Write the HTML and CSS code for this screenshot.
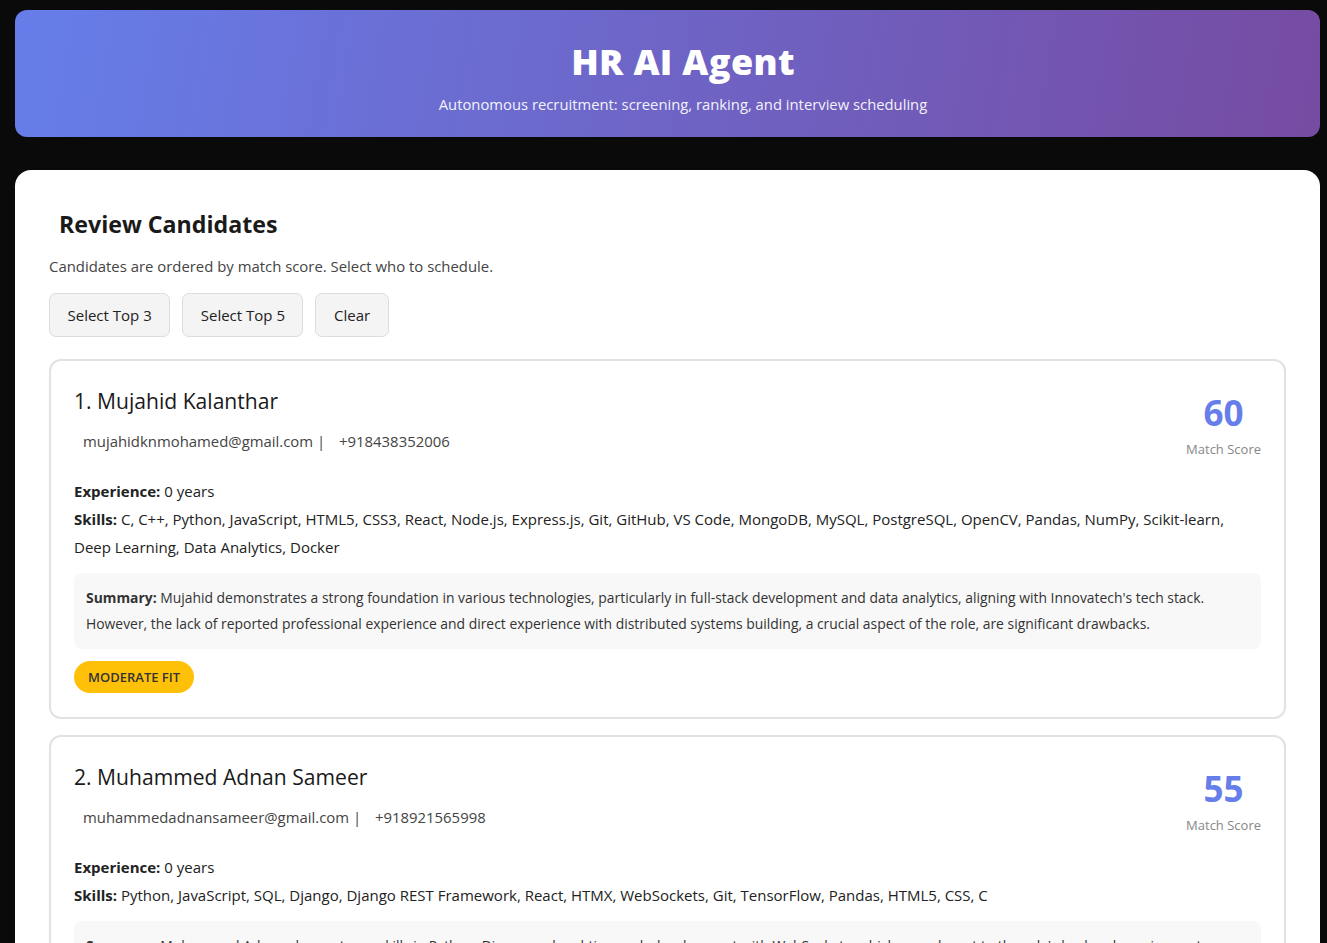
FILE: index.html
```html
<!DOCTYPE html>
<html lang="en">
<head>
<meta charset="utf-8">
<title>HR AI Agent</title>
<link rel="stylesheet" href="styles.css">
</head>
<body>
<div class="page">
  <header class="hero">
    <h1 class="hero-title">HR AI Agent</h1>
    <p class="hero-sub">Autonomous recruitment: screening, ranking, and interview scheduling</p>
  </header>

  <main class="panel">
    <h2 class="panel-title">Review Candidates</h2>
    <p class="panel-desc">Candidates are ordered by match score. Select who to schedule.</p>
    <div class="actions">
      <button class="btn">Select Top 3</button>
      <button class="btn">Select Top 5</button>
      <button class="btn">Clear</button>
    </div>

    <section class="cand">
      <div class="cand-head">
        <div class="cand-id">
          <h3 class="cand-name">1. Mujahid Kalanthar</h3>
          <div class="cand-contact"><span class="ico"></span>mujahidknmohamed@gmail.com | <span class="ico ico-wide"></span>+918438352006</div>
        </div>
        <div class="score">
          <div class="score-num">60</div>
          <div class="score-label">Match Score</div>
        </div>
      </div>
      <p class="line"><strong>Experience:</strong> 0 years</p>
      <p class="line"><strong>Skills:</strong> C, C++, Python, JavaScript, HTML5, CSS3, React, Node.js, Express.js, Git, GitHub, VS Code, MongoDB, MySQL, PostgreSQL, OpenCV, Pandas, NumPy, Scikit-learn, Deep Learning, Data Analytics, Docker</p>
      <div class="summary"><strong>Summary:</strong> Mujahid demonstrates a strong foundation in various technologies, particularly in full-stack development and data analytics, aligning with Innovatech's tech stack. However, the lack of reported professional experience and direct experience with distributed systems building, a crucial aspect of the role, are significant drawbacks.</div>
      <span class="badge">MODERATE FIT</span>
    </section>

    <section class="cand">
      <div class="cand-head">
        <div class="cand-id">
          <h3 class="cand-name">2. Muhammed Adnan Sameer</h3>
          <div class="cand-contact"><span class="ico"></span>muhammedadnansameer@gmail.com | <span class="ico ico-wide"></span>+918921565998</div>
        </div>
        <div class="score">
          <div class="score-num">55</div>
          <div class="score-label">Match Score</div>
        </div>
      </div>
      <p class="line"><strong>Experience:</strong> 0 years</p>
      <p class="line"><strong>Skills:</strong> Python, JavaScript, SQL, Django, Django REST Framework, React, HTMX, WebSockets, Git, TensorFlow, Pandas, HTML5, CSS, C</p>
      <div class="summary"><strong>Summary:</strong> Muhammed Adnan shows strong skills in Python, Django and real-time web development with WebSockets, which are relevant to the role's backend requirements. However, the absence of professional experience and limited exposure to distributed systems are notable gaps.</div>
      <span class="badge">MODERATE FIT</span>
    </section>
  </main>
</div>
</body>
</html>
```

FILE: styles.css
```css
* { box-sizing: border-box; }

html, body {
  margin: 0;
  padding: 0;
  background: #0a0a0a;
  font-family: "Open Sans", "Noto Sans", sans-serif;
  color: #222;
}

.page {
  padding: 10px 7px 0 15px;
  display: flex;
  flex-direction: column;
  gap: 33px;
}

.hero {
  height: 127px;
  border-radius: 12px;
  background: linear-gradient(100deg, #667eea 0%, #764ba2 100%);
  color: #fff;
  text-align: center;
  display: flex;
  flex-direction: column;
  align-items: center;
  padding: 26px 0 0 31px;
}

.hero-title {
  margin: 0;
  font-size: 36px;
  line-height: 52px;
  font-weight: 800;
  letter-spacing: 0.3px;
}

.hero-sub {
  margin: 6px 0 0;
  font-size: 14.8px;
  line-height: 20px;
  opacity: 0.92;
}

.panel {
  background: #fff;
  border-radius: 16px 16px 0 0;
  padding: 36px 34px 20px;
}

.panel-title {
  margin: 0 0 0 10px;
  font-size: 23.2px;
  line-height: 36px;
  font-weight: 700;
  color: #1a1a1a;
}

.panel-desc {
  margin: 14px 0 0;
  font-size: 14.9px;
  line-height: 20px;
  color: #444;
}

.actions {
  display: flex;
  gap: 12px;
  margin-top: 17px;
}

.btn {
  height: 44px;
  padding: 0 17.5px;
  font-family: inherit;
  font-size: 15px;
  color: #222;
  background: #f4f4f4;
  border: 1px solid #dcdcdc;
  border-radius: 7px;
}

.cand {
  margin-top: 22px;
  border: 2px solid #e2e2e2;
  border-radius: 12px;
  padding: 24px 23px 24px;
}

.cand + .cand { margin-top: 16px; }

.cand-head {
  display: flex;
  justify-content: space-between;
  align-items: flex-start;
}

.cand-name {
  margin: 0;
  font-size: 21.1px;
  line-height: 32px;
  font-weight: 400;
  color: #1a1a1a;
}

.cand-contact {
  margin-top: 14px;
  font-size: 14.9px;
  line-height: 20px;
  color: #444;
}

.ico {
  display: inline-block;
  width: 9px;
}

.ico-wide { width: 10px; }

.score {
  text-align: center;
  padding-top: 9px;
}

.score-num {
  font-size: 35px;
  line-height: 38px;
  font-weight: 700;
  color: #667eea;
}

.score-label {
  margin-top: 8px;
  font-size: 13px;
  line-height: 18px;
  color: #888;
}

.line {
  margin: 0;
  font-size: 15px;
  line-height: 28px;
  color: #222;
}

.cand-head + .line { margin-top: 19px; }

.summary {
  margin-top: 12px;
  background: #f8f8f8;
  border-radius: 8px;
  padding: 12px 12px;
  font-size: 13.9px;
  line-height: 26px;
  color: #333;
}

.badge {
  display: inline-block;
  margin-top: 12px;
  padding: 0 14px;
  height: 32px;
  line-height: 32px;
  border-radius: 16px;
  background: #ffc107;
  color: #333;
  font-size: 13px;
  font-weight: 600;
}
```
